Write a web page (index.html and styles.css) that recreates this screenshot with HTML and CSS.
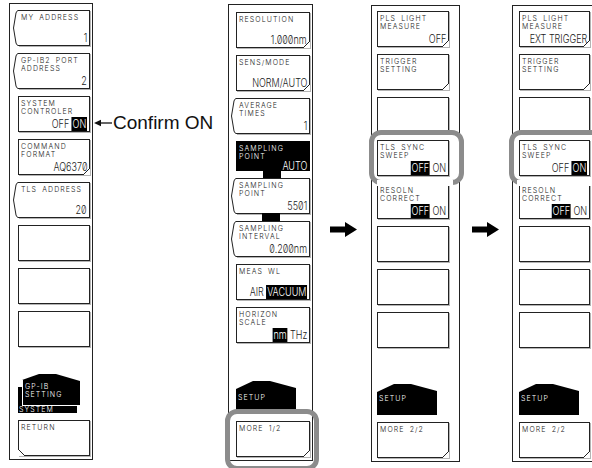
FILE: index.html
```html
<!DOCTYPE html>
<html lang="en">
<head>
    <meta charset="UTF-8">
    <title>GP-IB / Setup soft keys</title>
    <link rel="stylesheet" href="styles.css">
</head>
<body>
<div class="figure">

    <!-- GP-IB setting menu -->
    <div class="panel p1">
        <div class="key num">
            <svg class="bracket" width="6" height="36"><path d="M6 .5H5Q3.5 1 3 3L.5 18 3 33Q3.5 35 5 35.5H6"/></svg>
            <div class="label">MY ADDRESS</div>
            <div class="value">1</div>
        </div>
        <div class="key num">
            <svg class="bracket" width="6" height="36"><path d="M6 .5H5Q3.5 1 3 3L.5 18 3 33Q3.5 35 5 35.5H6"/></svg>
            <div class="label">GP-IB2 PORT<br>ADDRESS</div>
            <div class="value">2</div>
        </div>
        <div class="key">
            <div class="label">SYSTEM<br>CONTROLER</div>
            <div class="value">OFF <span class="inv">ON</span></div>
        </div>
        <div class="key fold">
            <div class="label">COMMAND<br>FORMAT</div>
            <div class="value">AQ6370</div>
        </div>
        <div class="key num">
            <svg class="bracket" width="6" height="36"><path d="M6 .5H5Q3.5 1 3 3L.5 18 3 33Q3.5 35 5 35.5H6"/></svg>
            <div class="label">TLS ADDRESS</div>
            <div class="value">20</div>
        </div>
        <div class="key"></div>
        <div class="key"></div>
        <div class="key"></div>

        <div class="stacked">
            <div class="tab-front">GP-IB<br>SETTING</div>
            <div class="tab-foot">SYSTEM</div>
        </div>
        <div class="key fold-left">
            <div class="label">RETURN</div>
        </div>
    </div>

    <div class="note">
        <svg width="18" height="8"><path d="M0 4 7 .8V7.2Z"/><path d="M6 4H18" class="line"/></svg>
        <span>Confirm ON</span>
    </div>

    <!-- Setup menu, page 1 -->
    <div class="panel p2">
        <div class="key fold">
            <div class="label">RESOLUTION</div>
            <div class="value">1.000nm</div>
        </div>
        <div class="key fold">
            <div class="label">SENS/MODE</div>
            <div class="value">NORM/AUTO</div>
        </div>
        <div class="key num">
            <svg class="bracket" width="6" height="36"><path d="M6 .5H5Q3.5 1 3 3L.5 18 3 33Q3.5 35 5 35.5H6"/></svg>
            <div class="label">AVERAGE<br>TIMES</div>
            <div class="value">1</div>
        </div>
        <div class="key dark linked">
            <div class="label">SAMPLING<br>POINT</div>
            <div class="value">AUTO</div>
        </div>
        <div class="key num linked">
            <svg class="bracket" width="6" height="36"><path d="M6 .5H5Q3.5 1 3 3L.5 18 3 33Q3.5 35 5 35.5H6"/></svg>
            <div class="label">SAMPLING<br>POINT</div>
            <div class="value">5501</div>
        </div>
        <div class="key num">
            <svg class="bracket" width="6" height="36"><path d="M6 .5H5Q3.5 1 3 3L.5 18 3 33Q3.5 35 5 35.5H6"/></svg>
            <div class="label">SAMPLING<br>INTERVAL</div>
            <div class="value">0.200nm</div>
        </div>
        <div class="key">
            <div class="label">MEAS WL</div>
            <div class="value">AIR <span class="inv">VACUUM</span></div>
        </div>
        <div class="key">
            <div class="label">HORIZON<br>SCALE</div>
            <div class="value"><span class="inv">nm</span> THz</div>
        </div>

        <div class="tab">SETUP</div>
        <div class="key fold">
            <div class="label">MORE 1/2</div>
        </div>
        <div class="ring ring-more"></div>
    </div>

    <div class="gap gap-a">
        <svg class="big-arrow" width="27" height="15"><path d="M0 4.5H15V0L27 7.5 15 15V10.5H0Z"/></svg>
    </div>

    <!-- Setup menu, page 2 -->
    <div class="panel p3">
        <div class="key fold">
            <div class="label">PLS LIGHT<br>MEASURE</div>
            <div class="value">OFF</div>
        </div>
        <div class="key fold">
            <div class="label">TRIGGER<br>SETTING</div>
        </div>
        <div class="key"></div>
        <div class="key">
            <div class="label">TLS SYNC<br>SWEEP</div>
            <div class="value"><span class="inv">OFF</span> ON</div>
        </div>
        <div class="key">
            <div class="label">RESOLN<br>CORRECT</div>
            <div class="value"><span class="inv">OFF</span> ON</div>
        </div>
        <div class="key"></div>
        <div class="key"></div>
        <div class="key"></div>

        <div class="tab">SETUP</div>
        <div class="key fold">
            <div class="label">MORE 2/2</div>
        </div>
        <div class="ring ring-sync"></div>
    </div>

    <div class="gap gap-b">
        <svg class="big-arrow" width="27" height="15"><path d="M0 4.5H15V0L27 7.5 15 15V10.5H0Z"/></svg>
    </div>

    <!-- Setup menu, page 2 after the change -->
    <div class="panel p4">
        <div class="key fold">
            <div class="label">PLS LIGHT<br>MEASURE</div>
            <div class="value">EXT TRIGGER</div>
        </div>
        <div class="key fold">
            <div class="label">TRIGGER<br>SETTING</div>
        </div>
        <div class="key"></div>
        <div class="key">
            <div class="label">TLS SYNC<br>SWEEP</div>
            <div class="value">OFF <span class="inv">ON</span></div>
        </div>
        <div class="key">
            <div class="label">RESOLN<br>CORRECT</div>
            <div class="value"><span class="inv">OFF</span> ON</div>
        </div>
        <div class="key"></div>
        <div class="key"></div>
        <div class="key"></div>

        <div class="tab">SETUP</div>
        <div class="key fold">
            <div class="label">MORE 2/2</div>
        </div>
        <div class="ring ring-sync"></div>
    </div>

</div>
</body>
</html>
```

FILE: styles.css
```css
body {
    margin: 0;
    width: 592px;
    height: 468px;
    overflow: hidden;
    background: #fff;
    color: #111;
    font-family: "Liberation Sans", Arial, sans-serif;
}

.figure {
    display: flex;
    align-items: flex-start;
}

/* soft key column */
.panel {
    position: relative;
    flex: none;
    display: flex;
    flex-direction: column;
    gap: 7px;
    box-sizing: border-box;
    height: 457px;
    border: 1px solid #222;
}

.p1 {
    margin: 3px 0 0 9px;
    width: 84px;
    padding: 6px 2px 3px 8px;
}

.p2 {
    margin-top: 4px;
    width: 85px;
    padding: 7px 2px 3px 7px;
}

.p3 {
    margin-top: 5px;
    width: 89px;
    padding: 5px 10px 3px 5px;
}

.p4 {
    margin-top: 5px;
    width: 89px;
    padding: 5px 10px 3px 6px;
}

.key {
    position: relative;
    flex: none;
    box-sizing: border-box;
    height: 36px;
    border: 1px solid #222;
    background: #fff;
    box-shadow: 1px 1px 0 #b4b4b4;
    display: flex;
    flex-direction: column;
    padding: 3px 2px 2px 2px;
}

.label,
.tab,
.tab-front,
.tab-foot {
    font-family: Inter, "DejaVu Sans", sans-serif;
    font-weight: 300;
    font-size: 7px;
    line-height: 8px;
    letter-spacing: 1.1px;
    word-spacing: 2px;
    white-space: nowrap;
}

.label {
    color: #1a1a1a;
}

.value {
    margin-top: auto;
    align-self: flex-end;
    font-family: Inter, "Liberation Sans", sans-serif;
    font-feature-settings: "zero";
    font-weight: 300;
    font-size: 11px;
    line-height: 10px;
    white-space: nowrap;
    color: #1a1a1a;
    transform: scaleX(.82);
    transform-origin: right;
}

.inv {
    background: #000;
    color: #fff;
    padding: 0 1px;
}

/* numeric entry key: "<" left edge */
.num {
    border-left: none;
    padding-left: 3px;
}

.bracket {
    position: absolute;
    left: -5px;
    top: -1px;
    fill: none;
    stroke: #222;
    stroke-width: 1;
}

/* sub menu key: cut corner */
.fold::after,
.fold-left::after {
    content: "";
    position: absolute;
    bottom: -1px;
    width: 7px;
    height: 7px;
}

.fold::after {
    right: -1px;
    background: linear-gradient(135deg, transparent 0 calc(50% - .7px), #222 calc(50% - .7px) calc(50% + .7px), #fff calc(50% + .7px));
}

.fold-left::after {
    left: -1px;
    background: linear-gradient(225deg, transparent 0 calc(50% - .7px), #222 calc(50% - .7px) calc(50% + .7px), #fff calc(50% + .7px));
}

.dark {
    background: #000;
    border-color: #000;
    box-shadow: none;
    height: 30px;
}

.dark .label,
.dark .value {
    color: #fff;
}

.linked::after {
    content: "";
    position: absolute;
    top: 100%;
    left: 26px;
    width: 18px;
    height: 8px;
    background: #000;
}

/* menu title tab */
.tab {
    margin-top: auto;
    width: 60px;
    height: 33px;
    box-sizing: border-box;
    padding: 13px 0 0 2px;
    background: #000;
    color: #fff;
    clip-path: polygon(0 8px, 17px 0, 34px 0, 100% 7px, 100% 100%, 0 100%);
}

.p3 .tab,
.p4 .tab {
    height: 31px;
    padding-top: 11px;
}

.stacked {
    position: relative;
    margin-top: auto;
    width: 62px;
    height: 39px;
}

.stacked::before {
    content: "";
    position: absolute;
    left: 0;
    top: 13px;
    bottom: 0;
    width: 59px;
    background: #000;
}

.tab-front {
    position: relative;
    margin-left: 4px;
    width: 58px;
    height: 32px;
    box-sizing: border-box;
    padding: 9px 0 0 2px;
    background: #000;
    border-left: 1px solid #fff;
    border-bottom: 1px solid #fff;
    color: #fff;
    line-height: 7.5px;
    clip-path: polygon(0 6px, 17px 0, 34px 0, 100% 7px, 100% 100%, 0 100%);
}

.tab-foot {
    position: relative;
    width: 59px;
    height: 7px;
    padding-left: 1px;
    box-sizing: border-box;
    color: #fff;
    line-height: 7px;
}

/* grey emphasis frames */
.ring {
    position: absolute;
    box-sizing: border-box;
    border: 5px solid #8c8c8c;
    border-radius: 12px;
}

.ring-more {
    left: -4px;
    top: 404px;
    width: 94px;
    height: 62px;
}

.ring-sync {
    left: -3px;
    top: 124px;
    width: 95px;
    height: 55px;
}

.p4 .ring-sync {
    left: -4px;
}

/* white halo under the frame, it bites into the next key's caption */
.ring-sync::after {
    content: "";
    position: absolute;
    left: 3px;
    right: 6px;
    top: 100%;
    height: 6px;
    background: #fff;
}

/* between the columns */
.note {
    flex: none;
    width: 135px;
    margin-top: 113px;
    display: flex;
    align-items: center;
    gap: 1px;
    padding-left: 1px;
    box-sizing: border-box;
    font-size: 19px;
    line-height: 19px;
}

.note svg {
    fill: #111;
}

.note .line {
    stroke: #111;
    stroke-width: 1.3;
}

.gap {
    flex: none;
    box-sizing: border-box;
    margin-top: 222px;
}

.gap-a {
    width: 58px;
    padding-left: 17px;
}

.gap-b {
    width: 52px;
    padding-left: 12px;
}

.big-arrow {
    display: block;
    fill: #000;
}
```
